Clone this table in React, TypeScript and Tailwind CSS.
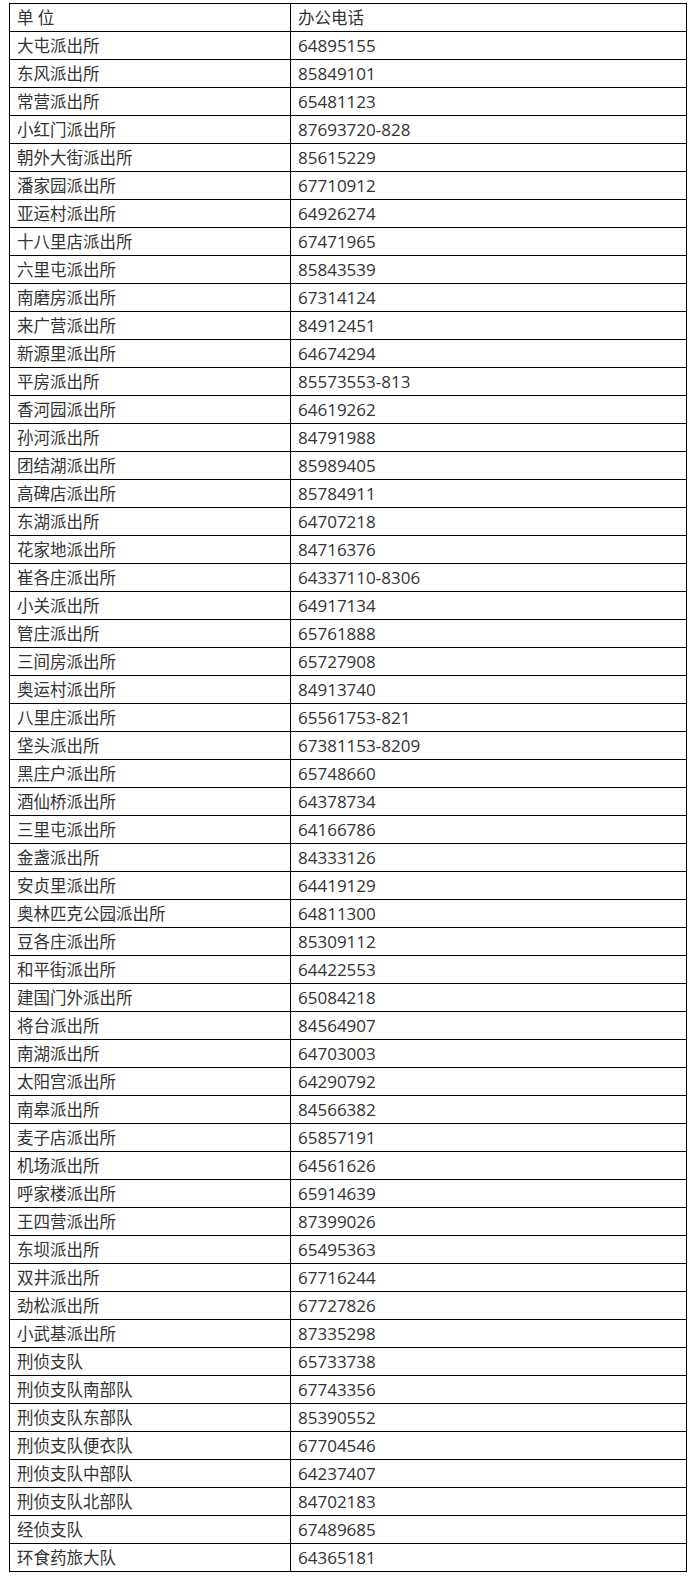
import React from "react";

const rows: [string, string][] = [
  ["大屯派出所", "64895155"],
  ["东风派出所", "85849101"],
  ["常营派出所", "65481123"],
  ["小红门派出所", "87693720-828"],
  ["朝外大街派出所", "85615229"],
  ["潘家园派出所", "67710912"],
  ["亚运村派出所", "64926274"],
  ["十八里店派出所", "67471965"],
  ["六里屯派出所", "85843539"],
  ["南磨房派出所", "67314124"],
  ["来广营派出所", "84912451"],
  ["新源里派出所", "64674294"],
  ["平房派出所", "85573553-813"],
  ["香河园派出所", "64619262"],
  ["孙河派出所", "84791988"],
  ["团结湖派出所", "85989405"],
  ["高碑店派出所", "85784911"],
  ["东湖派出所", "64707218"],
  ["花家地派出所", "84716376"],
  ["崔各庄派出所", "64337110-8306"],
  ["小关派出所", "64917134"],
  ["管庄派出所", "65761888"],
  ["三间房派出所", "65727908"],
  ["奥运村派出所", "84913740"],
  ["八里庄派出所", "65561753-821"],
  ["垡头派出所", "67381153-8209"],
  ["黑庄户派出所", "65748660"],
  ["酒仙桥派出所", "64378734"],
  ["三里屯派出所", "64166786"],
  ["金盏派出所", "84333126"],
  ["安贞里派出所", "64419129"],
  ["奥林匹克公园派出所", "64811300"],
  ["豆各庄派出所", "85309112"],
  ["和平街派出所", "64422553"],
  ["建国门外派出所", "65084218"],
  ["将台派出所", "84564907"],
  ["南湖派出所", "64703003"],
  ["太阳宫派出所", "64290792"],
  ["南皋派出所", "84566382"],
  ["麦子店派出所", "65857191"],
  ["机场派出所", "64561626"],
  ["呼家楼派出所", "65914639"],
  ["王四营派出所", "87399026"],
  ["东坝派出所", "65495363"],
  ["双井派出所", "67716244"],
  ["劲松派出所", "67727826"],
  ["小武基派出所", "87335298"],
  ["刑侦支队", "65733738"],
  ["刑侦支队南部队", "67743356"],
  ["刑侦支队东部队", "85390552"],
  ["刑侦支队便衣队", "67704546"],
  ["刑侦支队中部队", "64237407"],
  ["刑侦支队北部队", "84702183"],
  ["经侦支队", "67489685"],
  ["环食药旅大队", "64365181"],
];

export default function App() {
  const cell =
    "border border-black h-[28px] p-0 align-middle leading-[27px] whitespace-nowrap";
  const c1 = cell + " pl-[7px] text-[16.5px]";
  const c2 = cell + " pl-[7px] text-[17px]";
  return (
    <div
      className="bg-white w-[698px] min-h-[1577px] pt-[3px] pl-[9px] text-[#333333]"
      style={{ fontFamily: '"Open Sans", "Noto Sans CJK SC", sans-serif' }}
    >
      <table className="border-collapse w-[677px] table-fixed">
        <colgroup>
          <col className="w-[281px]" />
          <col className="w-[396px]" />
        </colgroup>
        <tbody>
          <tr>
            <td className={c1}>单 位</td>
            <td className={c1}>办公电话</td>
          </tr>
          {rows.map(([n, p]) => (
            <tr key={n}>
              <td className={c1}>{n}</td>
              <td className={c2}>{p}</td>
            </tr>
          ))}
        </tbody>
      </table>
    </div>
  );
}
